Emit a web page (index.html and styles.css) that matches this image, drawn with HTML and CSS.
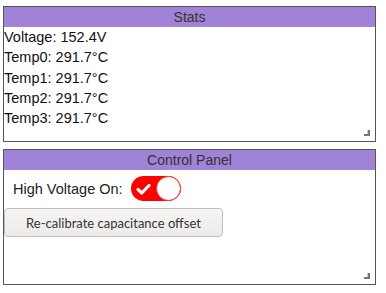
FILE: index.html
```html
<!DOCTYPE html>
<html lang="en">
<head>
  <meta charset="UTF-8">
  <meta name="viewport" content="width=device-width, initial-scale=1.0">
  <title>Stats</title>
  <link rel="stylesheet" href="styles.css">
</head>
<body>
  <div class="panel">
    <div class="panel-title">Stats</div>
    <div class="stat">Voltage: 152.4V</div>
    <div class="stat">Temp0: 291.7&deg;C</div>
    <div class="stat">Temp1: 291.7&deg;C</div>
    <div class="stat">Temp2: 291.7&deg;C</div>
    <div class="stat">Temp3: 291.7&deg;C</div>
  </div>

  <div class="panel">
    <div class="panel-title">Control Panel</div>
    <div class="control-row">
      <span class="control-label">High Voltage On:</span>
      <span class="toggle on">
        <svg class="toggle-check" width="15" height="12" viewBox="0 0 15 12">
          <polyline points="2,6.5 5.8,10 13,2.5" fill="none" stroke="#fff" stroke-width="3.2" stroke-linecap="round" stroke-linejoin="round"/>
        </svg>
        <span class="toggle-knob"></span>
      </span>
    </div>
    <button class="btn">Re-calibrate capacitance offset</button>
  </div>
</body>
</html>
```

FILE: styles.css
```css
body {
  margin: 0;
  padding: 6px 0 0 3px;
  font-family: "Liberation Sans", Arial, sans-serif;
  font-size: 14.5px;
  color: #111;
  background: #fff;
}

.panel {
  width: 371px;
  height: 134px;
  border: 1px solid #555;
  margin-bottom: 7px;
  resize: both;
  overflow: auto;
}

/* small L-shaped grip like the reference */
.panel::-webkit-resizer {
  background:
    linear-gradient(#777, #777) 8px 4px / 2px 6px no-repeat,
    linear-gradient(#777, #777) 4px 8px / 6px 2px no-repeat,
    linear-gradient(#ccc, #ccc) 7px 4px / 1px 4px no-repeat;
}

.panel-title {
  background-color: #a083d6;
  color: #333;
  font-size: 14px;
  text-align: center;
  height: 20px;
  line-height: 20px;
}

.stat {
  line-height: 20.3px;
}

.control-row {
  display: flex;
  align-items: center;
  gap: 8px;
  padding: 6px 0 0 9px;
}

.control-label {
  color: #222;
}

.toggle {
  position: relative;
  display: inline-block;
  width: 50px;
  height: 25px;
  border-radius: 13px;
  background-color: #f00;
}

.toggle-check {
  position: absolute;
  left: 5px;
  top: 7px;
}

.toggle-knob {
  position: absolute;
  right: 0;
  top: 0;
  width: 23px;
  height: 23px;
  border: 1px solid #f33;
  border-radius: 50%;
  background: #fff;
}

.btn {
  display: block;
  margin: 7px 0 0 0;
  width: 219px;
  height: 29px;
  padding: 0;
  font-family: Lato, "Open Sans", sans-serif;
  font-size: 13px;
  color: #333;
  background: linear-gradient(#f6f5f4, #edebe9);
  border: 1px solid #c3bfbb;
  border-radius: 4px;
}
```
